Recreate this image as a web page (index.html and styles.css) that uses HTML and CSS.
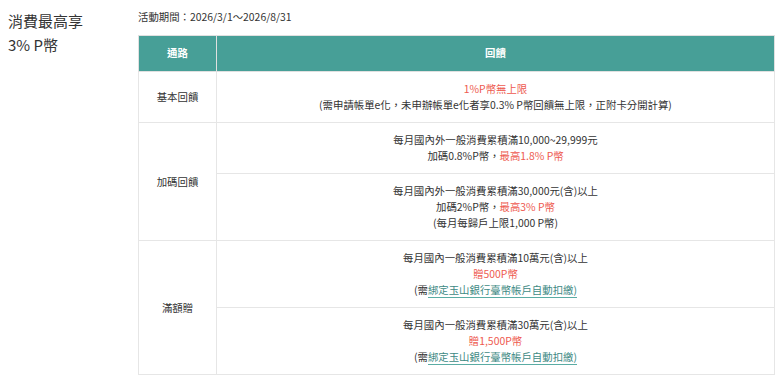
FILE: index.html
```html
<!DOCTYPE html>
<html lang="zh-Hant">
<head>
<meta charset="utf-8">
<title>消費最高享 3% P幣</title>
<link rel="stylesheet" href="styles.css">
</head>
<body>
<div class="page">
  <div class="side">
    <h2 class="title">消費最高享<br>3% P幣</h2>
  </div>
  <div class="main">
    <p class="period">活動期間：2026/3/1～2026/8/31</p>
    <table class="reward">
      <thead>
        <tr><th class="col-ch">通路</th><th>回饋</th></tr>
      </thead>
      <tbody>
        <tr>
          <td class="ch">基本回饋</td>
          <td><span class="red">1%P幣無上限</span><br>(需申請帳單e化，未申辦帳單e化者享0.3% P幣回饋無上限，正附卡分開計算)</td>
        </tr>
        <tr>
          <td class="ch" rowspan="2">加碼回饋</td>
          <td>每月國內外一般消費累積滿10,000~29,999元<br>加碼0.8%P幣，<span class="red">最高1.8% P幣</span></td>
        </tr>
        <tr>
          <td>每月國內外一般消費累積滿30,000元(含)以上<br>加碼2%P幣，<span class="red">最高3% P幣</span><br>(每月每歸戶上限1,000 P幣)</td>
        </tr>
        <tr>
          <td class="ch" rowspan="2">滿額贈</td>
          <td>每月國內一般消費累積滿10萬元(含)以上<br><span class="red">贈500P幣</span><br>(需<a class="link" href="#">綁定玉山銀行臺幣帳戶自動扣繳)</a></td>
        </tr>
        <tr>
          <td>每月國內一般消費累積滿30萬元(含)以上<br><span class="red">贈1,500P幣</span><br>(需<a class="link" href="#">綁定玉山銀行臺幣帳戶自動扣繳)</a></td>
        </tr>
      </tbody>
    </table>
  </div>
</div>
</body>
</html>
```
FILE: styles.css
```css
* { box-sizing: border-box; }
html, body { margin: 0; padding: 0; background: #fff; }
body {
  font-family: "Noto Sans CJK TC", "Noto Sans", sans-serif;
  color: #333;
}
.page {
  display: flex;
  padding: 9px 5px 0 8px;
}
.side {
  width: 130px;
  flex: none;
}
.title {
  margin: 0;
  font-size: 15px;
  font-weight: 400;
  line-height: 24px;
  color: #333;
}
.main {
  flex: 1;
}
.period {
  margin: 0 0 10px;
  font-size: 10.4px;
  line-height: 16px;
  color: #333;
}
.reward {
  width: 100%;
  border-collapse: collapse;
  font-size: 10.4px;
  line-height: 16px;
  border: 1px solid #e4e4e4;
}
.reward th {
  background: #479f97;
  color: #fff;
  font-weight: 700;
  text-align: center;
  padding: 9px 4px 10px;
  border: 1px solid #e0e0e0;
}
.reward th.col-ch { width: 78px; }
.reward td {
  text-align: center;
  vertical-align: middle;
  padding: 9px 4px;
  border: 1px solid #e6e6e6;
}
.reward td.ch { color: #333; }
.red { color: #ee5a4f; }
.link {
  color: #3e8a84;
  text-decoration: none;
  border-bottom: 1px solid #5aaca4;
}
```
